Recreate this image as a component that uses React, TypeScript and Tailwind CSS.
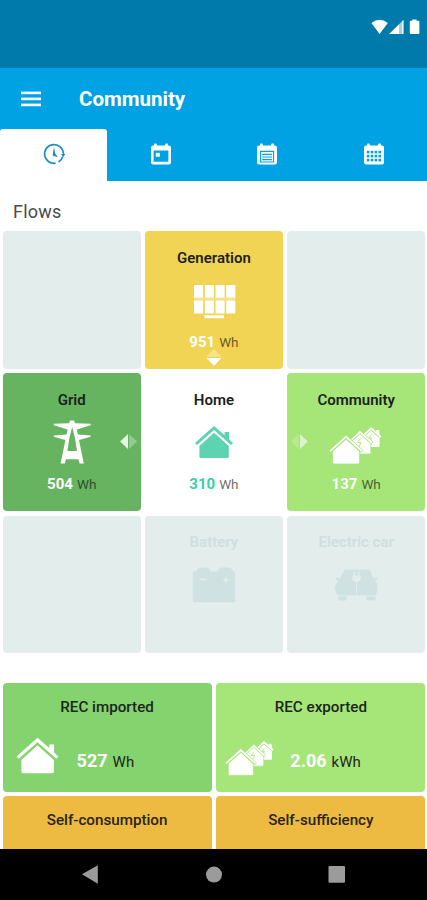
import type { ReactNode } from 'react';
import clsx from 'clsx';

type Direction = 'down' | 'left' | 'right';

const ARROW_POS: Record<Direction, string> = {
  down:  'left-1/2 -translate-x-1/2 bottom-[3px]',
  left:  'right-[4px] top-[60px]',
  right: 'left-[4px] top-[60px]',
};

const ARROW_ROTATE: Record<Direction, string> = {
  down:  '',
  left:  'rotate-90 opacity-85',
  right: '-rotate-90 opacity-60',
};

// Diamond made of two triangles, the solid one points along the flow
function FlowArrow({ direction }: { direction: Direction }) {
  return (
    <span className={clsx('absolute', ARROW_POS[direction])}>
      <svg viewBox="0 0 17 17" className={clsx('block w-[17px] h-[17px]', ARROW_ROTATE[direction])} fill="#fff">
        <path d="M8.5 0 L16 7.8 H1 Z" opacity="0.35" />
        <path d="M1 9 H16 L8.5 16.8 Z" />
      </svg>
    </span>
  );
}

function HouseIcon({ className }: { className?: string }) {
  return (
    <svg viewBox="0 0 48 48" className={clsx('shrink-0', className)} fill="currentColor">
      <path d="M24 8 L34.6 17.3 V14 H39 V21.3 L43 25 L41 27 L24 12 L7 27 L5 25 Z" />
      <path d="M24 14.8 L38.8 28 V38.8 Q38.8 40 37.6 40 H10.6 Q9.4 40 9.4 38.8 V28 Z" />
    </svg>
  );
}

function CommunityIcon({ className, gap }: { className?: string; gap: string }) {
  return (
    <svg viewBox="-4 0 56 48" className={clsx('shrink-0', className)} fill="currentColor">
      {/* back */}
      <path d="M39 9 L44 13.2 V12 H47.4 V16 L49.4 18.4 L47.6 20 V28 Q47.6 29 46.6 29 H37 L28.5 18.8 Z" />
      <path d="M31 19.5 L39 12.2 L47 19" fill="none" stroke={gap} strokeWidth="1" />
      <path d="M39.5 16.5 L37 20 H39.6 L38 23.5" fill="none" stroke={gap} strokeWidth="0.9" />
      {/* middle */}
      <path d="M28 12.4 L41 24 L39.4 25.6 L38.8 25 V34.8 Q38.8 36 37.6 36 H27 L15.8 24 Z" stroke={gap} strokeWidth="0.8" />
      <path d="M18 24.6 L28 15.8 L38.6 25.2" fill="none" stroke={gap} strokeWidth="1" />
      <path d="M28.6 20.4 L25.6 24.6 H29 L27 29" fill="none" stroke={gap} strokeWidth="0.9" />
      {/* front */}
      <path d="M14 17 L31 32.4 L29.4 34.2 L27.6 33 V44.6 Q27.6 46 26.2 46 H1.8 Q0.6 46 0.6 44.6 V33 L-1.2 34.2 L-2.8 32.4 Z" stroke={gap} strokeWidth="0.8" />
      <path d="M-0.6 34 L14 20.9 L28.8 34" fill="none" stroke={gap} strokeWidth="1.2" />
    </svg>
  );
}

function SolarIcon() {
  return (
    <svg viewBox="0 0 48 48" className="w-12 h-12" fill="currentColor">
      {[4, 14.8, 25.5, 36.2].map(x => (
        <g key={x}>
          <rect x={x} y="9" width="9.1" height="12.8" rx="0.5" />
          <rect x={x} y="24.4" width="9.1" height="13.1" rx="0.5" />
        </g>
      ))}
      <rect x="4" y="21.8" width="41.3" height="2.6" opacity="0.3" />
      <rect x="14.4" y="39.3" width="19.6" height="2.9" />
    </svg>
  );
}

function PylonIcon() {
  return (
    <svg viewBox="0 0 48 48" className="w-12 h-12" fill="currentColor" fillRule="evenodd">
      <path d="M22.2 2.6 H26 L27.2 5.2 L42.6 5.8 V7.2 L28.8 11.4 L29.8 16.6 L42.6 17.4 V18.8 L31 22 L35.8 45.6 H31.6 L30.4 41.2 H18 L16.8 45.6 H12.6 L17.4 22 L5.8 18.8 V17.4 L18.6 16.6 L19.6 11.4 L5.8 7.2 V5.8 L21 5.2 Z M24.2 9 L21.4 20 L19.4 33 H29 L27 20 Z" />
    </svg>
  );
}

function BatteryIcon() {
  return (
    <svg viewBox="0 0 48 48" className="w-12 h-12" fill="currentColor">
      <path d="M6 10.4 Q8 6.8 11 6.6 H16 Q19 6.8 20.8 10.4 H27.4 Q29.2 6.8 32 6.6 H38 Q41.4 6.8 43.4 10.4 H44 Q45.2 10.4 45.2 11.6 V40 Q45.2 41.2 44 41.2 H4 Q2.8 41.2 2.8 40 V11.6 Q2.8 10.4 4 10.4 Z" />
      <path d="M10 18.4 H16 M33.2 18.8 H38.4 M35.8 16.2 V21.4" stroke="#e2edec" strokeWidth="1.5" />
    </svg>
  );
}

function CarIcon() {
  return (
    <svg viewBox="0 0 48 48" className="w-12 h-12" fill="currentColor">
      <path d="M14 8.8 H36 Q37.6 8.8 38.3 10.2 L41.6 17.6 L44.6 16.6 L45.4 18.2 L43 19.8 Q45.6 23 45.6 27 Q45.6 31.6 43.6 34.4 V38.2 Q43.6 39.5 42.3 39.5 H35.5 Q34.3 39.5 34.3 38.2 V34.4 H14.7 V38.2 Q14.7 39.5 13.5 39.5 H7.4 Q6.2 39.5 6.2 38.2 V34.4 Q3 31.6 3 27 Q3 23 6.6 19.8 L3.6 18.2 L4.4 16.6 L8 17.6 L11.8 10.2 Q12.5 8.8 14 8.8 Z" />
      <path d="M20.2 14.4 H28.8 V17 Q28.8 21 24.5 21 Q20.2 21 20.2 17 Z M21.6 10.6 H23 V15 H21.6 Z M26 10.6 H27.4 V15 H26 Z" fill="#e2edec" />
      <path d="M24.5 20 V34.4 M5 34.8 H44" stroke="#e2edec" strokeWidth="0.9" />
    </svg>
  );
}

function ClockIcon() {
  return (
    <svg viewBox="0 0 22 22" className="w-[22px] h-[22px]" fill="none" stroke="#1b8fce" strokeWidth="1.7">
      <path d="M12.6 20.2 A9.4 9.4 0 1 1 20.4 11" />
      <path d="M19.8 13.6 A9.4 9.4 0 0 1 15.6 19.1" />
      <path d="M18 11 H22.3 L20.2 14 Z" fill="#1b8fce" stroke="none" />
      <path d="M11 4 L12.2 10.4 L14.8 14 L10.4 13 Q9.2 12.2 9.8 10.8 Z" fill="#1b8fce" stroke="none" />
    </svg>
  );
}

function CalendarIcon({ children }: { children: ReactNode }) {
  return (
    <svg viewBox="0 0 20 22" className="w-5 h-[22px]" fill="#fff">
      <rect x="0" y="2.4" width="20" height="19.1" rx="2.2" />
      <rect x="3" y="0.5" width="2.8" height="4" rx="1" />
      <rect x="14.2" y="0.5" width="2.8" height="4" rx="1" />
      {children}
    </svg>
  );
}

const TABS: { id: string; icon: ReactNode }[] = [
  { id: 'now', icon: <ClockIcon /> },
  {
    id: 'day',
    icon: (
      <CalendarIcon>
        <rect x="2.6" y="7.6" width="14.8" height="11.2" rx="0.5" fill="#00a2e3" />
        <rect x="4.8" y="9.8" width="4" height="4" fill="#fff" />
      </CalendarIcon>
    ),
  },
  {
    id: 'month',
    icon: (
      <CalendarIcon>
        <path d="M3.6 19 V8.4 H16.6 V19 Z" fill="none" stroke="#00a2e3" strokeWidth="1.1" />
        <path d="M5.2 11.4 H15 M5.2 14 H15 M5.2 16.6 H15" stroke="#00a2e3" strokeWidth="1.1" />
      </CalendarIcon>
    ),
  },
  {
    id: 'year',
    icon: (
      <CalendarIcon>
        {[7.8, 11.8, 15.8].map(y => [2.8, 6.7, 10.6, 14.5].map(x => (
          <rect key={`${x}-${y}`} x={x} y={y} width="2.6" height="2.6" fill="#00a2e3" />
        )))}
      </CalendarIcon>
    ),
  },
];

interface Flow {
  title?: string;
  value?: string;
  icon?: ReactNode;
  color: string;
  valueColor?: string;
  arrow?: Direction;
  disabled?: boolean;
}

const FLOWS: Flow[] = [
  { color: 'bg-[#e2edec]' },
  { title: 'Generation', value: '951', icon: <SolarIcon />, color: 'bg-[#f2d455]', arrow: 'down' },
  { color: 'bg-[#e2edec]' },
  { title: 'Grid', value: '504', icon: <PylonIcon />, color: 'bg-[#67b460]', arrow: 'left' },
  { title: 'Home', value: '310', icon: <HouseIcon className="w-12 h-12 text-[#5dd3b2]" />, color: 'bg-white', valueColor: 'text-[#38cfa6]' },
  { title: 'Community', value: '137', icon: <CommunityIcon className="w-14 h-12" gap="#a6e578" />, color: 'bg-[#a6e578]', arrow: 'right' },
  { color: 'bg-[#e2edec]' },
  { title: 'Battery', icon: <BatteryIcon />, color: 'bg-[#e2edec]', disabled: true },
  { title: 'Electric car', icon: <CarIcon />, color: 'bg-[#e2edec]', disabled: true },
];

function FlowTile({ title, value, icon, color, valueColor = 'text-white', arrow, disabled }: Flow) {
  return (
    <div className={clsx('relative h-[137.8px] rounded-[4px] flex flex-col items-center pt-[16.6px]', color)}>
      {title && (
        <p className={clsx('text-[15px] leading-5 font-semibold', disabled ? 'text-[#d0dfde]' : 'text-[#1d1f1d]')}>
          {title}
        </p>
      )}
      {icon && (
        <div className={clsx('mt-[8.4px] h-12 flex justify-center', disabled ? 'text-[#d0e1e1]' : 'text-white')}>{icon}</div>
      )}
      {value && (
        <p className="mt-[7.6px] flex items-baseline gap-1 leading-5">
          <span className={clsx('text-[15px] font-bold', valueColor)}>{value}</span>
          <span className="text-[13.5px] text-black/60">Wh</span>
        </p>
      )}
      {arrow && <FlowArrow direction={arrow} />}
    </div>
  );
}

function RecTile({ title, value, unit, color, children }: {
  title: string; value: string; unit: string; color: string; children: ReactNode;
}) {
  return (
    <div className={clsx('h-[108.5px] rounded-[4px] pt-[13.2px]', color)}>
      <p className="text-center text-[15.2px] leading-5 font-medium text-[#1d261b]">{title}</p>
      <div className="mt-4 flex items-start text-white">
        <div className="w-[74px] h-[54px] shrink-0 flex">{children}</div>
        <p className="mt-[16.5px] flex items-baseline gap-[5px] leading-6">
          <span className="text-[18px] font-bold">{value}</span>
          <span className="text-[15px] text-[#1d261b]">{unit}</span>
        </p>
      </div>
    </div>
  );
}

export default function App() {
  return (
    <div className="w-full h-[900px] overflow-hidden flex flex-col bg-white font-['Roboto',sans-serif]">
      {/* Status bar */}
      <div className="h-[68px] shrink-0 bg-[#007aab] flex justify-end items-start pt-[19px] pr-[7px]">
        <svg viewBox="0 0 49 16" className="w-[49px] h-4" fill="#fff">
          <path d="M0.4 4 Q8.5 -2.6 16.8 4 L8.6 15 Z" />
          <path d="M32.4 1 V15 H18.2 Z" opacity="0.65" />
          <path d="M28 5.4 V15 H18.2 Z M31.2 2 L32.4 1 V15 H31.2 Z" />
          <path d="M41.2 0.4 H45.6 V1.8 H47.3 Q48.4 1.8 48.4 2.9 V14 Q48.4 15 47.3 15 H39.8 Q38.8 15 38.8 14 V2.9 Q38.8 1.8 39.8 1.8 H41.2 Z" />
        </svg>
      </div>

      {/* App bar */}
      <header className="shrink-0 bg-[#00a2e3]">
        <div className="h-[61px] flex items-center pl-[21px] gap-[38px]">
          <button aria-label="Menu">
            <svg viewBox="0 0 20 16" className="block w-5 h-4" fill="#fff">
              <rect y="0.6" width="20" height="2.6" />
              <rect y="6.6" width="20" height="2.6" />
              <rect y="12.6" width="20" height="2.6" />
            </svg>
          </button>
          <h1 className="text-[20.5px] leading-6 font-bold text-white">Community</h1>
        </div>
        <nav className="grid grid-cols-4 h-[52px]">
          {TABS.map((tab, i) => (
            <button
              key={tab.id}
              className={clsx('flex items-center justify-center pl-px pb-[3px]', i === 0 && 'bg-white rounded-t-[3px]')}
            >
              {tab.icon}
            </button>
          ))}
        </nav>
      </header>

      {/* Content */}
      <main className="flex-1 min-h-0 overflow-hidden pl-[2.6px] pr-[1.7px]">
        <h2 className="h-[50px] pt-[19px] pl-[10.5px] text-[18px] leading-6 tracking-[0.2px] text-[#4a4a4a]">Flows</h2>

        <section className="grid grid-cols-3 gap-x-1 gap-y-[4.5px]">
          {FLOWS.map((flow, i) => <FlowTile key={i} {...flow} />)}
        </section>

        <section className="mt-[30px] grid grid-cols-2 gap-x-[4.8px] gap-y-[4.5px]">
          <RecTile title="REC imported" value="527" unit="Wh" color="bg-[#84d36f]">
            <HouseIcon className="w-[53px] h-[53px] ml-[8px] mt-[-4px]" />
          </RecTile>
          <RecTile title="REC exported" value="2.06" unit="kWh" color="bg-[#a6e578]">
            <CommunityIcon className="w-[52px] h-[46px] ml-[8px] mt-[-0.2px]" gap="#a6e578" />
          </RecTile>
          {['Self-consumption', 'Self-sufficiency'].map(title => (
            <div key={title} className="h-[108.5px] rounded-[4px] pt-[13.2px] bg-[#eebb42]">
              <p className="text-center text-[15.2px] leading-5 font-medium text-[#2a2414]">{title}</p>
            </div>
          ))}
        </section>
      </main>

      {/* System navigation */}
      <footer className="h-[51px] shrink-0 bg-black flex justify-center">
        <svg viewBox="0 0 264 51" className="w-[264px] h-[51px]" fill="#9b9b9b">
          <path d="M0 25.3 L15.8 16.3 V34.7 Z" />
          <circle cx="132" cy="25.6" r="8" />
          <rect x="246.5" y="17" width="16.5" height="16.8" rx="1" />
        </svg>
      </footer>
    </div>
  );
}
